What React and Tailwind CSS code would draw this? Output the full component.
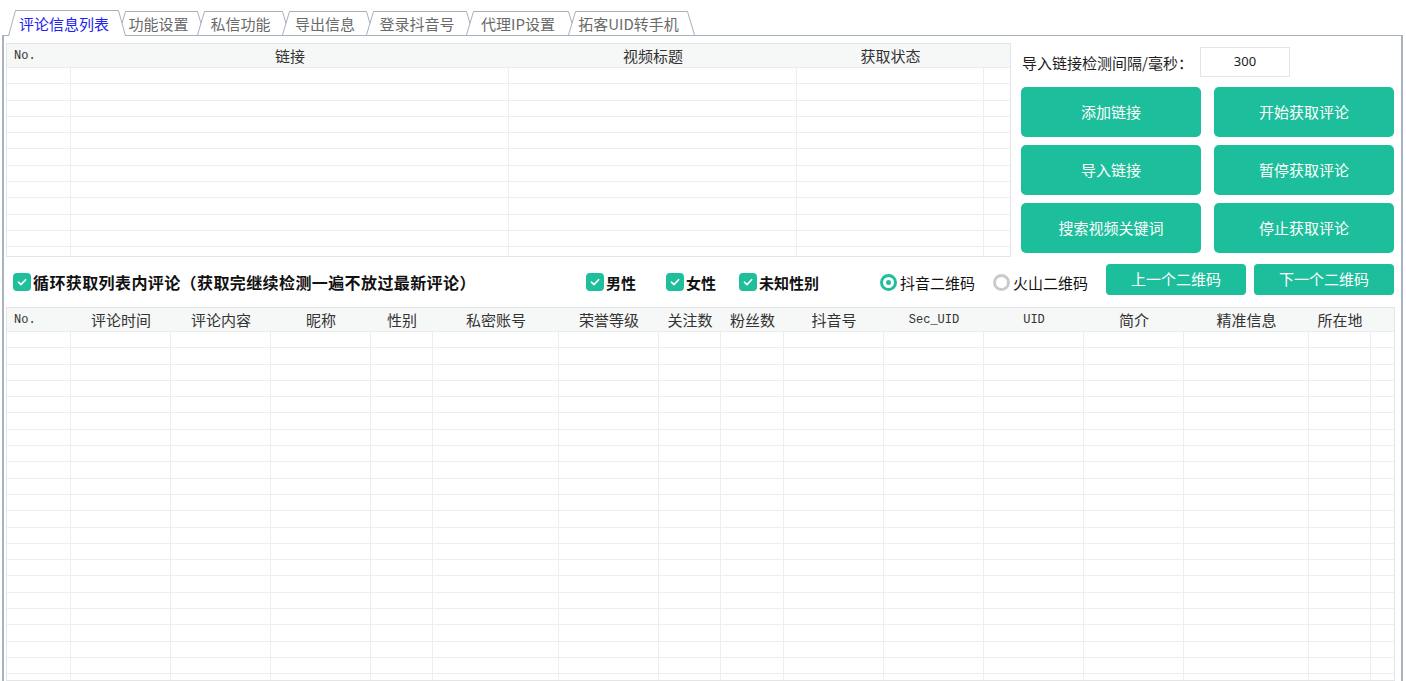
import React from 'react';

const tabs = [
  { label: '评论信息列表', w: 118, wc: 'w-[118px]', active: true },
  { label: '功能设置', w: 87, wc: 'w-[87px]' },
  { label: '私信功能', w: 93, wc: 'w-[93px]' },
  { label: '导出信息', w: 92, wc: 'w-[92px]' },
  { label: '登录抖音号', w: 108, wc: 'w-[108px]' },
  { label: '代理IP设置', w: 110, wc: 'w-[110px]' },
  { label: '拓客UID转手机', w: 127, wc: 'w-[127px]' },
];

function Tab({ label, w, wc, active, first }) {
  const h = active ? 26 : 24;
  return (
    <div
      className={`relative shrink-0 ${wc} ${first ? '' : '-ml-2'} ${
        active ? 'h-[26px] z-10 -mb-px text-[#2323f0]' : 'h-[24px] text-[#6a6a6a]'
      } flex items-center justify-center pr-[6px] text-[15px] leading-none`}
    >
      <svg className="absolute left-0 top-0" width={w} height={h}>
        <path
          d={`M0.5 ${h} L7.5 0.5 L${w - 7.5} 0.5 L${w - 0.5} ${h}`}
          fill="#fff"
          stroke="#a6b0bc"
          strokeWidth="1"
        />
      </svg>
      <span className="relative">{label}</span>
    </div>
  );
}

const topCols = [
  { label: 'No.', w: 'w-[64px]', mono: true },
  { label: '链接', w: 'w-[438px]' },
  { label: '视频标题', w: 'w-[288px]' },
  { label: '获取状态', w: 'w-[187px]' },
  { label: '', w: 'flex-1' },
];

const bottomCols = [
  { label: 'No.', w: 'w-[64px]', mono: true },
  { label: '评论时间', w: 'w-[100px]' },
  { label: '评论内容', w: 'w-[100px]' },
  { label: '昵称', w: 'w-[100px]' },
  { label: '性别', w: 'w-[62px]' },
  { label: '私密账号', w: 'w-[126px]' },
  { label: '荣誉等级', w: 'w-[100px]' },
  { label: '关注数', w: 'w-[62px]' },
  { label: '粉丝数', w: 'w-[63px]' },
  { label: '抖音号', w: 'w-[100px]' },
  { label: 'Sec_UID', w: 'w-[100px]', code: true },
  { label: 'UID', w: 'w-[100px]', code: true },
  { label: '简介', w: 'w-[100px]' },
  { label: '精准信息', w: 'w-[125px]' },
  { label: '所在地', w: 'w-[62px]' },
  { label: '', w: 'flex-1' },
];

function Grid({ cols, rows, className }) {
  return (
    <div className={`border border-[#e2e4e6] bg-white overflow-hidden ${className}`}>
      <div className="flex h-[24px] bg-[#f6f7f7] border-b border-[#eaeced]">
        {cols.map((c, i) => (
          <div
            key={i}
            className={`${c.w} shrink-0 flex items-center ${
              c.mono
                ? "justify-start pl-[7px] font-['Liberation_Mono',monospace] text-[12px] text-[#333]"
                : c.code
                ? "justify-center font-['Liberation_Mono',monospace] text-[12px] text-[#333]"
                : 'justify-center text-[15px] text-[#333]'
            } leading-none`}
          >
            {c.label}
          </div>
        ))}
      </div>
      {Array.from({ length: rows }).map((_, r) => (
        <div key={r} className="flex h-[16.3px] border-b border-[#eeeeee]">
          {cols.map((c, i) => (
            <div
              key={i}
              className={`${c.w} shrink-0 ${i < cols.length - 1 ? 'border-r border-[#eeeeee]' : ''}`}
            />
          ))}
        </div>
      ))}
    </div>
  );
}

function Check() {
  return (
    <span className="w-[18px] h-[18px] rounded-[4px] bg-[#20bf9b] flex items-center justify-center shrink-0">
      <svg width="12" height="12" viewBox="0 0 12 12">
        <path
          d="M2.4 6.2 L5 8.6 L9.6 3.7"
          fill="none"
          stroke="#fff"
          strokeWidth="1.6"
          strokeLinecap="round"
          strokeLinejoin="round"
        />
      </svg>
    </span>
  );
}

function Radio({ on }) {
  return on ? (
    <span className="w-[17px] h-[17px] rounded-full border-[3px] border-[#20bf9b] flex items-center justify-center shrink-0">
      <span className="w-[5px] h-[5px] rounded-full bg-[#20bf9b]" />
    </span>
  ) : (
    <span className="w-[17px] h-[17px] rounded-full border-[3px] border-[#cacaca] shrink-0" />
  );
}

function Btn({ children }) {
  return (
    <div className="h-[50px] rounded-[5px] bg-[#1dbe9b] text-white text-[15px] leading-none flex items-center justify-center pb-px">
      {children}
    </div>
  );
}

export default function App() {
  return (
    <div className="w-[1406px] h-[681px] overflow-hidden bg-white flex flex-col font-['Noto_Sans_CJK_SC','Noto_Sans',sans-serif]">
      {/* tab strip */}
      <div className="flex items-end h-[35px] pl-[8px] shrink-0">
        {tabs.map((t, i) => (
          <Tab key={i} {...t} first={i === 0} />
        ))}
      </div>

      {/* panel */}
      <div className="flex-1 min-h-0 ml-[2px] mr-[3px] border-t border-l-2 border-r-2 border-[#a9b3bf] flex flex-col pl-[2px]">
        {/* top section */}
        <div className="flex pt-[7px] shrink-0">
          <Grid cols={topCols} rows={12} className="w-[1005px] h-[214px]" />
          <div className="ml-[10px] w-[373px] flex flex-col">
            <div className="flex items-center h-[30px] mt-[4px]">
              <span className="w-[179px] pl-px text-[15px] leading-none text-[#1e1e1e]">
                导入链接检测间隔/毫秒：
              </span>
              <div className="w-[90px] h-[30px] border border-[#e4e4e4] flex items-center justify-center text-[13px] text-[#222] font-['Noto_Sans',sans-serif]">
                300
              </div>
            </div>
            <div className="grid grid-cols-2 gap-x-[13px] gap-y-2 mt-[10px]">
              <Btn>添加链接</Btn>
              <Btn>开始获取评论</Btn>
              <Btn>导入链接</Btn>
              <Btn>暂停获取评论</Btn>
              <Btn>搜索视频关键词</Btn>
              <Btn>停止获取评论</Btn>
            </div>
          </div>
        </div>

        {/* options row */}
        <div className="flex items-center h-[50px] pl-[7px] shrink-0 text-[#111]">
          <div className="w-[573px] flex items-center gap-[2px]">
            <Check />
            <span className="text-[16px] font-bold leading-none tracking-[0.4px]">
              循环获取列表内评论（获取完继续检测一遍不放过最新评论）
            </span>
          </div>
          <div className="w-[80px] flex items-center gap-[2px]">
            <Check />
            <span className="text-[15px] font-bold leading-none">男性</span>
          </div>
          <div className="w-[73px] flex items-center gap-[2px]">
            <Check />
            <span className="text-[15px] font-bold leading-none">女性</span>
          </div>
          <div className="w-[141px] flex items-center gap-[2px]">
            <Check />
            <span className="text-[15px] font-bold leading-none">未知性别</span>
          </div>
          <div className="w-[113px] flex items-center gap-[3px]">
            <Radio on />
            <span className="text-[15px] leading-none">抖音二维码</span>
          </div>
          <div className="w-[113px] flex items-center gap-[3px]">
            <Radio />
            <span className="text-[15px] leading-none">火山二维码</span>
          </div>
          <div className="flex gap-2 self-start mt-[7px]">
            <div className="w-[140px] h-[31px] rounded-[4px] bg-[#1dbe9b] text-white text-[15px] leading-none flex items-center justify-center pb-[2px]">
              上一个二维码
            </div>
            <div className="w-[140px] h-[31px] rounded-[4px] bg-[#1dbe9b] text-white text-[15px] leading-none flex items-center justify-center pb-[2px]">
              下一个二维码
            </div>
          </div>
        </div>

        {/* bottom table */}
        <Grid cols={bottomCols} rows={23} className="w-[1389px] flex-1 min-h-0" />
      </div>
    </div>
  );
}
